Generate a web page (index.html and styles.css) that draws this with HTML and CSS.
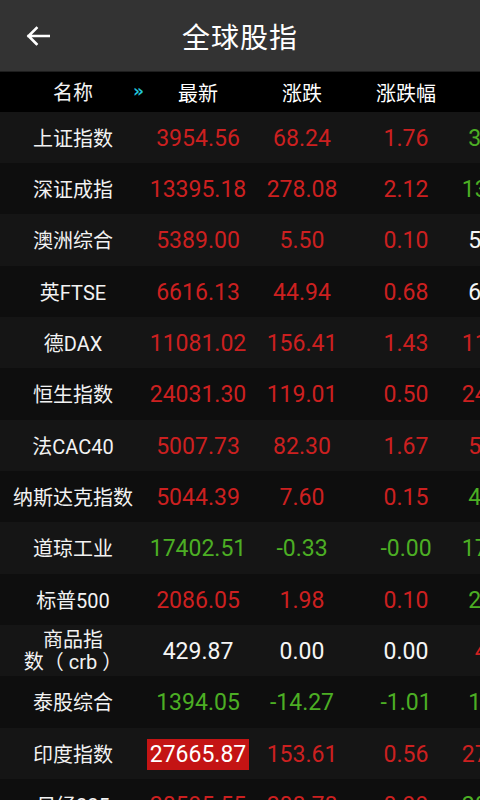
FILE: index.html
```
<!DOCTYPE html>
<html lang="zh">
<head>
<meta charset="utf-8">
<link rel="stylesheet" href="styles.css">
</head>
<body>
<div class="app">
  <header class="topbar">
    <svg class="back" width="24" height="20" viewBox="0 0 24 20"><path d="M10.5 2 2.5 10 10.5 18M2.5 10H23" fill="none" stroke="#fff" stroke-width="2.6" stroke-linecap="square" stroke-linejoin="miter"/></svg>
    <h1 class="title">全球股指</h1>
  </header>
  <div class="table">
    <div class="row head">
      <div class="cell name">名称<span class="more">»</span></div>
      <div class="cell">最新</div>
      <div class="cell">涨跌</div>
      <div class="cell">涨跌幅</div>
      <div class="cell">昨收</div>
    </div>
    <div class="row odd"><div class="cell name">上证指数</div><div class="cell red">3954.56</div><div class="cell red">68.24</div><div class="cell red">1.76</div><div class="cell green">3886.32</div></div>
    <div class="row even"><div class="cell name">深证成指</div><div class="cell red">13395.18</div><div class="cell red">278.08</div><div class="cell red">2.12</div><div class="cell green">13117.10</div></div>
    <div class="row odd"><div class="cell name">澳洲综合</div><div class="cell red">5389.00</div><div class="cell red">5.50</div><div class="cell red">0.10</div><div class="cell white">5383.50</div></div>
    <div class="row even"><div class="cell name">英FTSE</div><div class="cell red">6616.13</div><div class="cell red">44.94</div><div class="cell red">0.68</div><div class="cell white">6571.19</div></div>
    <div class="row odd"><div class="cell name">德DAX</div><div class="cell red">11081.02</div><div class="cell red">156.41</div><div class="cell red">1.43</div><div class="cell red">11124.60</div></div>
    <div class="row even"><div class="cell name">恒生指数</div><div class="cell red">24031.30</div><div class="cell red">119.01</div><div class="cell red">0.50</div><div class="cell red">24130.27</div></div>
    <div class="row odd"><div class="cell name">法CAC40</div><div class="cell red">5007.73</div><div class="cell red">82.30</div><div class="cell red">1.67</div><div class="cell red">5045.20</div></div>
    <div class="row even"><div class="cell name">纳斯达克指数</div><div class="cell red">5044.39</div><div class="cell red">7.60</div><div class="cell red">0.15</div><div class="cell green">4999.01</div></div>
    <div class="row odd"><div class="cell name">道琼工业</div><div class="cell green">17402.51</div><div class="cell green">-0.33</div><div class="cell green">-0.00</div><div class="cell green">17380.26</div></div>
    <div class="row even"><div class="cell name">标普500</div><div class="cell red">2086.05</div><div class="cell red">1.98</div><div class="cell red">0.10</div><div class="cell green">2083.45</div></div>
    <div class="row odd"><div class="cell name wrap">商品指<br>数（ crb ）</div><div class="cell white">429.87</div><div class="cell white">0.00</div><div class="cell white">0.00</div><div class="cell red">429.87</div></div>
    <div class="row even"><div class="cell name">泰股综合</div><div class="cell green">1394.05</div><div class="cell green">-14.27</div><div class="cell green">-1.01</div><div class="cell green">1404.21</div></div>
    <div class="row odd"><div class="cell name">印度指数</div><div class="cell"><span class="flash">27665.87</span></div><div class="cell red">153.61</div><div class="cell red">0.56</div><div class="cell red">27512.26</div></div>
    <div class="row even"><div class="cell name">日经225</div><div class="cell red">20595.55</div><div class="cell red">208.78</div><div class="cell red">0.99</div><div class="cell green">20386.77</div></div>
  </div>
</div>
</body>
</html>
```
FILE: styles.css
```
html, body {
  margin: 0;
  padding: 0;
  background: #111;
}
body {
  font-family: Roboto, "Noto Sans CJK SC", sans-serif;
  color: #fff;
  width: 480px;
  height: 800px;
  overflow: hidden;
}
.app {
  width: 480px;
  overflow: hidden;
}
.topbar {
  position: relative;
  height: 71px;
  background: #333333;
  border-bottom: 1px solid #1e1e1e;
  display: flex;
  align-items: center;
  justify-content: center;
}
.back {
  position: absolute;
  left: 26px;
  top: 26px;
}
.title {
  margin: 0;
  font-size: 28px;
  font-weight: normal;
  color: #fff;
  font-family: "Noto Sans CJK SC", sans-serif;
  letter-spacing: 1px;
}
.table {
  display: flex;
  flex-direction: column;
}
.row {
  display: flex;
  height: 51.35px;
  align-items: center;
  white-space: nowrap;
}
.row.head {
  height: 38.5px;
  background: #000;
  font-family: "Noto Sans CJK SC", sans-serif;
  padding-top: 1px;
}
.row.odd { background: #151515; }
.row.even { background: #0e0e0e; }
.cell {
  flex: 0 0 104px;
  width: 104px;
  text-align: center;
  font-size: 23px;
  line-height: 26px;
  padding-top: 3px;
}
.row.head .cell {
  font-size: 20px;
  padding-top: 2px;
}
.cell.name {
  flex: 0 0 146px;
  width: 146px;
  position: relative;
  font-size: 20px;
  font-family: Roboto, "Noto Sans CJK SC", sans-serif;
  color: #f2f2f2;
}
.cell.wrap {
  line-height: 22px;
  font-size: 20px;
  padding-top: 0;
  white-space: nowrap;
}
.more {
  position: absolute;
  right: 2px;
  top: 0;
  color: #22c4d8;
  font-size: 17px;
  font-family: "DejaVu Sans", sans-serif;
  font-weight: bold;
}
.red { color: #cc2020; }
.green { color: #4cae24; }
.white { color: #f5f5f5; }
.flash {
  display: inline-block;
  background: #c41414;
  color: #fff;
  padding: 0 3px;
  line-height: 31px;
}
```
